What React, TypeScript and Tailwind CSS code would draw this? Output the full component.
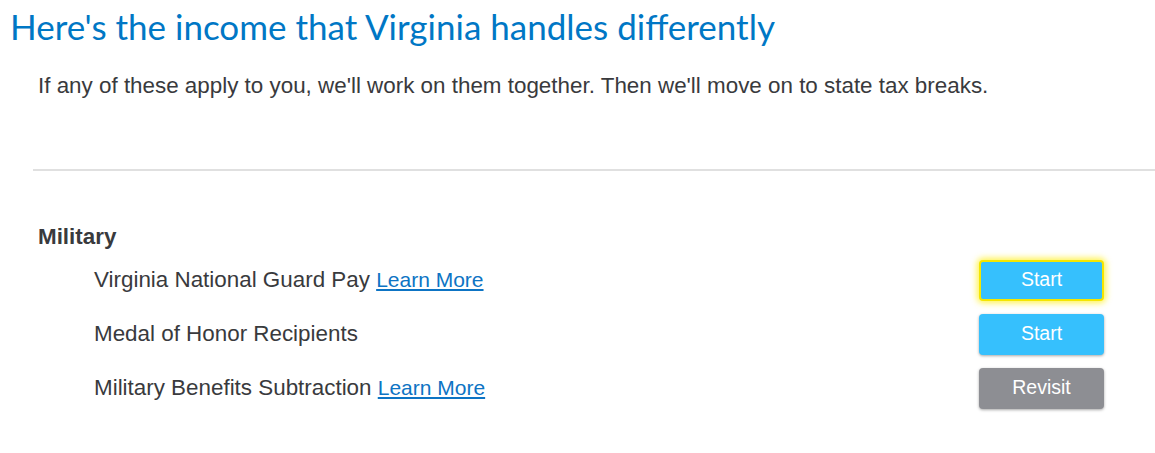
import React from "react";

interface IncomeItemProps {
  label: string;
  learnMore?: boolean;
  action: "Start" | "Revisit";
  focused?: boolean;
}

const items: IncomeItemProps[] = [
  { label: "Virginia National Guard Pay", learnMore: true, action: "Start", focused: true },
  { label: "Medal of Honor Recipients", action: "Start" },
  { label: "Military Benefits Subtraction", learnMore: true, action: "Revisit" },
];

const IncomeItem: React.FC<IncomeItemProps> = ({ label, learnMore, action, focused }) => {
  return (
    <div className="flex items-center h-[54px] pl-[94px] pr-[51px]">
      <p className="flex-1 text-[22.4px] leading-[28px] text-[#393a3d]">
        {label}
        {learnMore && (
          <>
            {" "}
            <a href="#" className="text-[21px] text-[#0d74c4] underline">
              Learn More
            </a>
          </>
        )}
      </p>
      {/* action button */}
      <button
        className={
          action === "Start"
            ? focused
              ? "w-[125px] h-[41px] rounded-[4px] bg-[#36c0fd] text-white text-[19.5px] border-2 border-[#f5e600] shadow-[0_0_6px_2px_rgba(255,238,0,0.7)]"
              : "w-[125px] h-[41px] rounded-[4px] bg-[#36c0fd] text-white text-[19.5px] shadow-[0_1px_3px_rgba(0,0,0,0.35)]"
            : "w-[125px] h-[41px] rounded-[4px] bg-[#8d8e93] text-white text-[19.5px] shadow-[0_1px_3px_rgba(0,0,0,0.35)]"
        }
      >
        {action}
      </button>
    </div>
  );
};

export default function App() {
  return (
    <div className="bg-white w-[1155px] h-[453px] overflow-hidden font-['Liberation_Sans',Arial,sans-serif]">
      {/* heading */}
      <h1 className="pl-[10px] pt-[4px] text-[35px] leading-[44px] text-[#0077c5] font-['Lato',sans-serif]">
        Here's the income that Virginia handles differently
      </h1>
      <p className="pl-[38px] mt-[24px] text-[22.4px] leading-[28px] text-[#393a3d]">
        If any of these apply to you, we'll work on them together. Then we'll move on to state tax breaks.
      </p>

      <hr className="ml-[33px] mt-[69px] border-t-2 border-[#e0e0e0]" />

      {/* section */}
      <section className="mt-[52px]">
        <h2 className="pl-[38px] text-[22.4px] leading-[28px] font-bold text-[#393a3d]">Military</h2>
        <div className="mt-[2px]">
          {items.map((item, idx) => (
            <IncomeItem key={idx} {...item} />
          ))}
        </div>
      </section>
    </div>
  );
}
